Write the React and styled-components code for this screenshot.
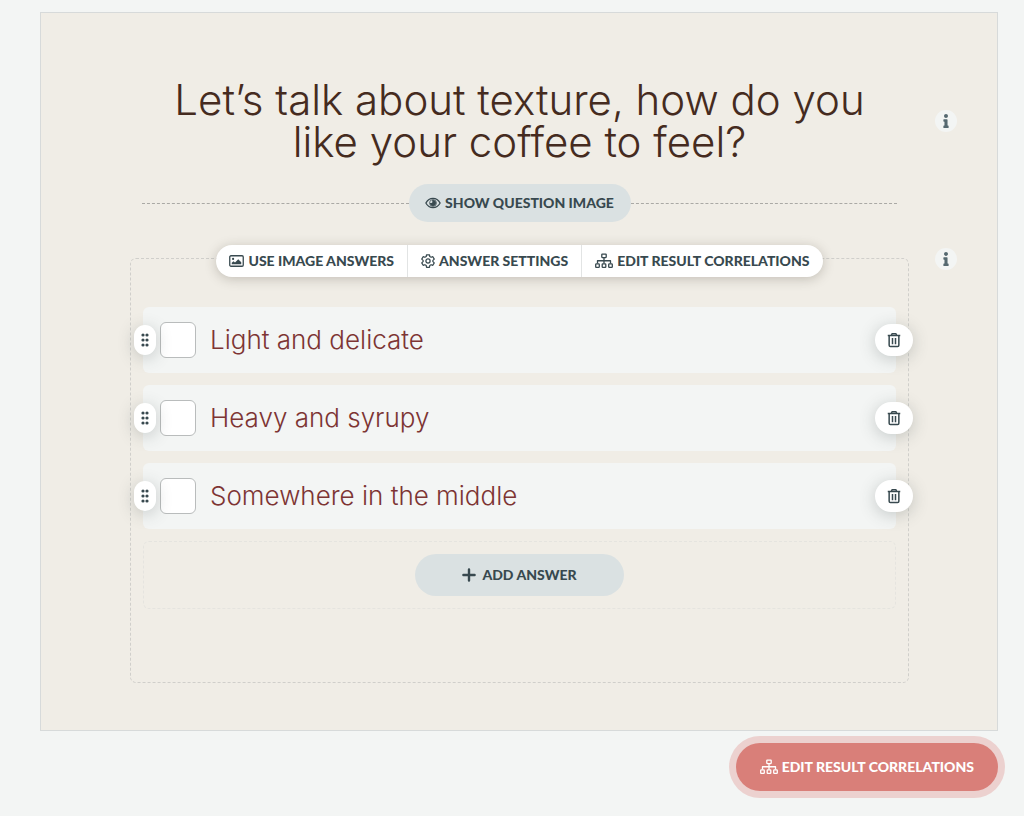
import styled, { createGlobalStyle, css } from "styled-components";
import { FaInfo } from "react-icons/fa";

const answers = [
  { id: "light", text: "Light and delicate" },
  { id: "heavy", text: "Heavy and syrupy" },
  { id: "middle", text: "Somewhere in the middle" },
];

const EyeIcon = () => (
  <svg width="16" height="14" viewBox="0 0 32 28" fill="none" stroke="currentColor" strokeWidth="2.6" aria-hidden="true">
    <path d="M1.8 14C5 8 10 4.6 16 4.6S27 8 30.2 14C27 20 22 23.4 16 23.4S5 20 1.8 14Z" />
    <circle cx="16" cy="14" r="7" strokeWidth="1.4" />
    <path d="M16 8a6 6 0 1 1-6 5.4c1.4 1.4 4.6.8 4.8-1.4.1-1.6-.6-2.6-1-3.6Z" fill="currentColor" stroke="none" />
  </svg>
);

const ImageIcon = () => (
  <svg width="15" height="14" viewBox="0 0 30 28" fill="none" stroke="currentColor" strokeWidth="2.6" aria-hidden="true">
    <rect x="1.5" y="3.5" width="27" height="21" rx="2.4" />
    <circle cx="8.2" cy="9.8" r="2.2" fill="currentColor" stroke="none" />
    <path d="M5.5 20.5v-3l3.5-3 3 2.5 6.5-6.5 6 6v4Z" fill="currentColor" stroke="none" />
  </svg>
);

const GearIcon = () => (
  <svg width="14" height="14" viewBox="0 0 28 28" fill="none" stroke="currentColor" strokeWidth="2.5" strokeLinejoin="round" aria-hidden="true">
    <path d="M11.2 1.5h5.6l.8 3.5 2.6 1.5 3.5-1.1 2.8 4.9-2.7 2.4v2.6l2.7 2.4-2.8 4.9-3.5-1.1-2.6 1.5-.8 3.5h-5.6l-.8-3.5-2.6-1.5-3.5 1.1-2.8-4.9 2.7-2.4v-2.6L1.5 10.3l2.8-4.9 3.5 1.1L10.4 5Z" />
    <circle cx="14" cy="14" r="4.2" />
  </svg>
);

const SitemapIcon = () => (
  <svg width="18" height="16" viewBox="0 0 36 32" fill="none" stroke="currentColor" strokeWidth="2.6" strokeLinejoin="round" aria-hidden="true">
    <rect x="13.6" y="2.2" width="8.8" height="7" rx="1" />
    <path d="M18 9v12M5 21v-5.5h26v5.5" />
    <rect x="1.4" y="21.6" width="7.2" height="7.2" rx="1.4" />
    <rect x="14.4" y="21.6" width="7.2" height="7.2" rx="1.4" />
    <rect x="27.4" y="21.6" width="7.2" height="7.2" rx="1.4" />
  </svg>
);

const TrashIcon = () => (
  <svg width="14" height="16" viewBox="0 0 28 32" fill="none" stroke="currentColor" strokeWidth="3" aria-hidden="true">
    <path d="M1.5 7h25" />
    <path d="M8.5 7l1.8-3.6h7.4L19.5 7" />
    <path d="M4.3 7v19.5q0 2.5 2.5 2.5h14.4q2.5 0 2.5-2.5V7" />
    <path d="M11 12v12.5M17 12v12.5" />
  </svg>
);

const PlusIcon = () => (
  <svg width="14" height="14" viewBox="0 0 14 14" fill="none" stroke="currentColor" strokeWidth="2.4" strokeLinecap="round" aria-hidden="true">
    <path d="M7 1.4v11.2M1.4 7h11.2" />
  </svg>
);

const GripIcon = () => (
  <svg width="8" height="14" viewBox="0 0 8 14" fill="currentColor" aria-hidden="true">
    {[2, 7, 12].map((y) => (
      <g key={y}>
        <circle cx="2" cy={y} r="1.6" />
        <circle cx="6" cy={y} r="1.6" />
      </g>
    ))}
  </svg>
);

const Answer = ({ id, text }) => (
  <AnswerRow>
    <Handle type="button" aria-label={`Move ${text}`}>
      <GripIcon />
    </Handle>
    <Checkbox type="checkbox" id={id} />
    <AnswerLabel htmlFor={id}>{text}</AnswerLabel>
    <DeleteButton type="button" aria-label={`Delete ${text}`}>
      <TrashIcon />
    </DeleteButton>
  </AnswerRow>
);

const App = () => (
  <>
    <GlobalStyle />
    <Page>
      <Card>
        <Title>Let’s talk about texture, how do you like your coffee to feel?</Title>
        <InfoButton type="button" aria-label="Question help">
          <FaInfo />
        </InfoButton>

        <Divider>
          <PillButton type="button">
            <EyeIcon />
            SHOW QUESTION IMAGE
          </PillButton>
        </Divider>

        <AnswerBox>
          <Toolbar>
            <ToolbarButton type="button">
              <ImageIcon />
              USE IMAGE ANSWERS
            </ToolbarButton>
            <ToolbarButton type="button">
              <GearIcon />
              ANSWER SETTINGS
            </ToolbarButton>
            <ToolbarButton type="button">
              <SitemapIcon />
              EDIT RESULT CORRELATIONS
            </ToolbarButton>
          </Toolbar>
          <AnswerList>
            {answers.map((answer) => (
              <Answer key={answer.id} {...answer} />
            ))}
            <AddRow>
              <PillButton type="button" $large>
                <PlusIcon />
                ADD ANSWER
              </PillButton>
            </AddRow>
          </AnswerList>
        </AnswerBox>
        <InfoButton type="button" aria-label="Answers help" $top>
          <FaInfo />
        </InfoButton>
      </Card>
      <Footer>
        <PrimaryButton type="button">
          <SitemapIcon />
          EDIT RESULT CORRELATIONS
        </PrimaryButton>
      </Footer>
    </Page>
  </>
);

const GlobalStyle = createGlobalStyle`
  *, *::before, *::after {
    box-sizing: border-box;
  }

  body {
    margin: 0;
    background: #f3f5f4;
    color: #38494f;
    font-family: Inter, "Liberation Sans", sans-serif;
  }
`;

const buttonBase = css`
  display: flex;
  align-items: center;
  justify-content: center;
  padding: 0;
  border: 0;
  color: #38494f;
  font: 900 14px/20px Lato, "Liberation Sans", sans-serif;
  white-space: nowrap;
  cursor: pointer;

  svg {
    flex: none;
  }
`;

const Page = styled.main`
  padding: 12px 26px 26px 40px;
`;

const Card = styled.section`
  display: grid;
  grid-template-columns: minmax(0, 1fr) 88px;
  padding: 66px 0 47px 89px;
  border: 1px solid #d7dada;
  background: #f0ede6;
`;

const Title = styled.h1`
  margin: 0;
  padding: 0 24px;
  color: #452b20;
  font-size: 42px;
  font-weight: 300;
  line-height: 42px;
  text-align: center;
`;

const InfoButton = styled.button`
  ${buttonBase}
  align-self: ${({ $top }) => ($top ? "start" : "center")};
  width: 22px;
  height: 22px;
  margin: ${({ $top }) => ($top ? "-10px" : "0")} 0 0 26px;
  border-radius: 50%;
  background: #f3f5f4;
  color: #566970;
`;

const Divider = styled.div`
  display: flex;
  grid-column: 1;
  align-items: center;
  margin: 21px 12px 36px;

  &::before,
  &::after {
    content: "";
    flex: 1;
    border-top: 1px dashed #aaa9a5;
  }
`;

const PillButton = styled.button`
  ${buttonBase}
  gap: ${({ $large }) => ($large ? "6px" : "4px")};
  width: ${({ $large }) => ($large ? "209px" : "222px")};
  height: ${({ $large }) => ($large ? "42px" : "38px")};
  border-radius: 21px;
  background: #dae1e2;
`;

const AnswerBox = styled.div`
  grid-column: 1;
  min-height: 425px;
  border: 1px dashed #d0cfcb;
  border-radius: 6px;
`;

const Toolbar = styled.div`
  display: flex;
  width: fit-content;
  margin: -14px auto 30px;
  border-radius: 16px;
  background: #fff;
  box-shadow: 0 2px 12px rgba(60, 50, 40, 0.25);
`;

const ToolbarButton = styled.button`
  ${buttonBase}
  gap: 4px;
  height: 32px;
  padding: 0 13px;
  background: none;

  & + & {
    border-left: 1px solid #e2e4e4;
  }
`;

const AnswerList = styled.div`
  display: grid;
  gap: 12px;
  padding: 0 12px;
`;

const AnswerRow = styled.div`
  display: flex;
  align-items: center;
  height: 66px;
  border-radius: 6px;
  background: #f3f5f4;
`;

const Handle = styled.button`
  ${buttonBase}
  position: relative;
  width: 22px;
  height: 30px;
  margin-left: -9px;
  border-radius: 11px;
  background: #fff;
  box-shadow: 0 3px 16px rgba(60, 70, 70, 0.25);
`;

const Checkbox = styled.input`
  appearance: none;
  width: 36px;
  height: 36px;
  margin: 0 0 0 4px;
  border: 1px solid #b9bcbc;
  border-radius: 6px;
  background: #fff;

  &:checked {
    background: #7d3433;
  }
`;

const AnswerLabel = styled.label`
  flex: 1;
  margin-left: 14px;
  color: #7d3433;
  font-size: 26px;
  font-weight: 300;
  line-height: 30px;
`;

const DeleteButton = styled.button`
  ${buttonBase}
  width: 38px;
  height: 32px;
  margin-right: -17px;
  border-radius: 16px;
  background: #fff;
  box-shadow: 0 3px 16px rgba(60, 70, 70, 0.25);
`;

const AddRow = styled.div`
  display: flex;
  align-items: center;
  justify-content: center;
  height: 68px;
  border: 1px dashed #e5e4df;
  border-radius: 6px;
`;

const Footer = styled.footer`
  display: flex;
  justify-content: flex-end;
  padding-top: 12px;
`;

const PrimaryButton = styled.button`
  ${buttonBase}
  gap: 4px;
  height: 48px;
  padding: 0 24px;
  border-radius: 24px;
  background: #d97f79;
  box-shadow: 0 0 0 7px #ecd1cf;
  color: #fff;
`;

export default App;
